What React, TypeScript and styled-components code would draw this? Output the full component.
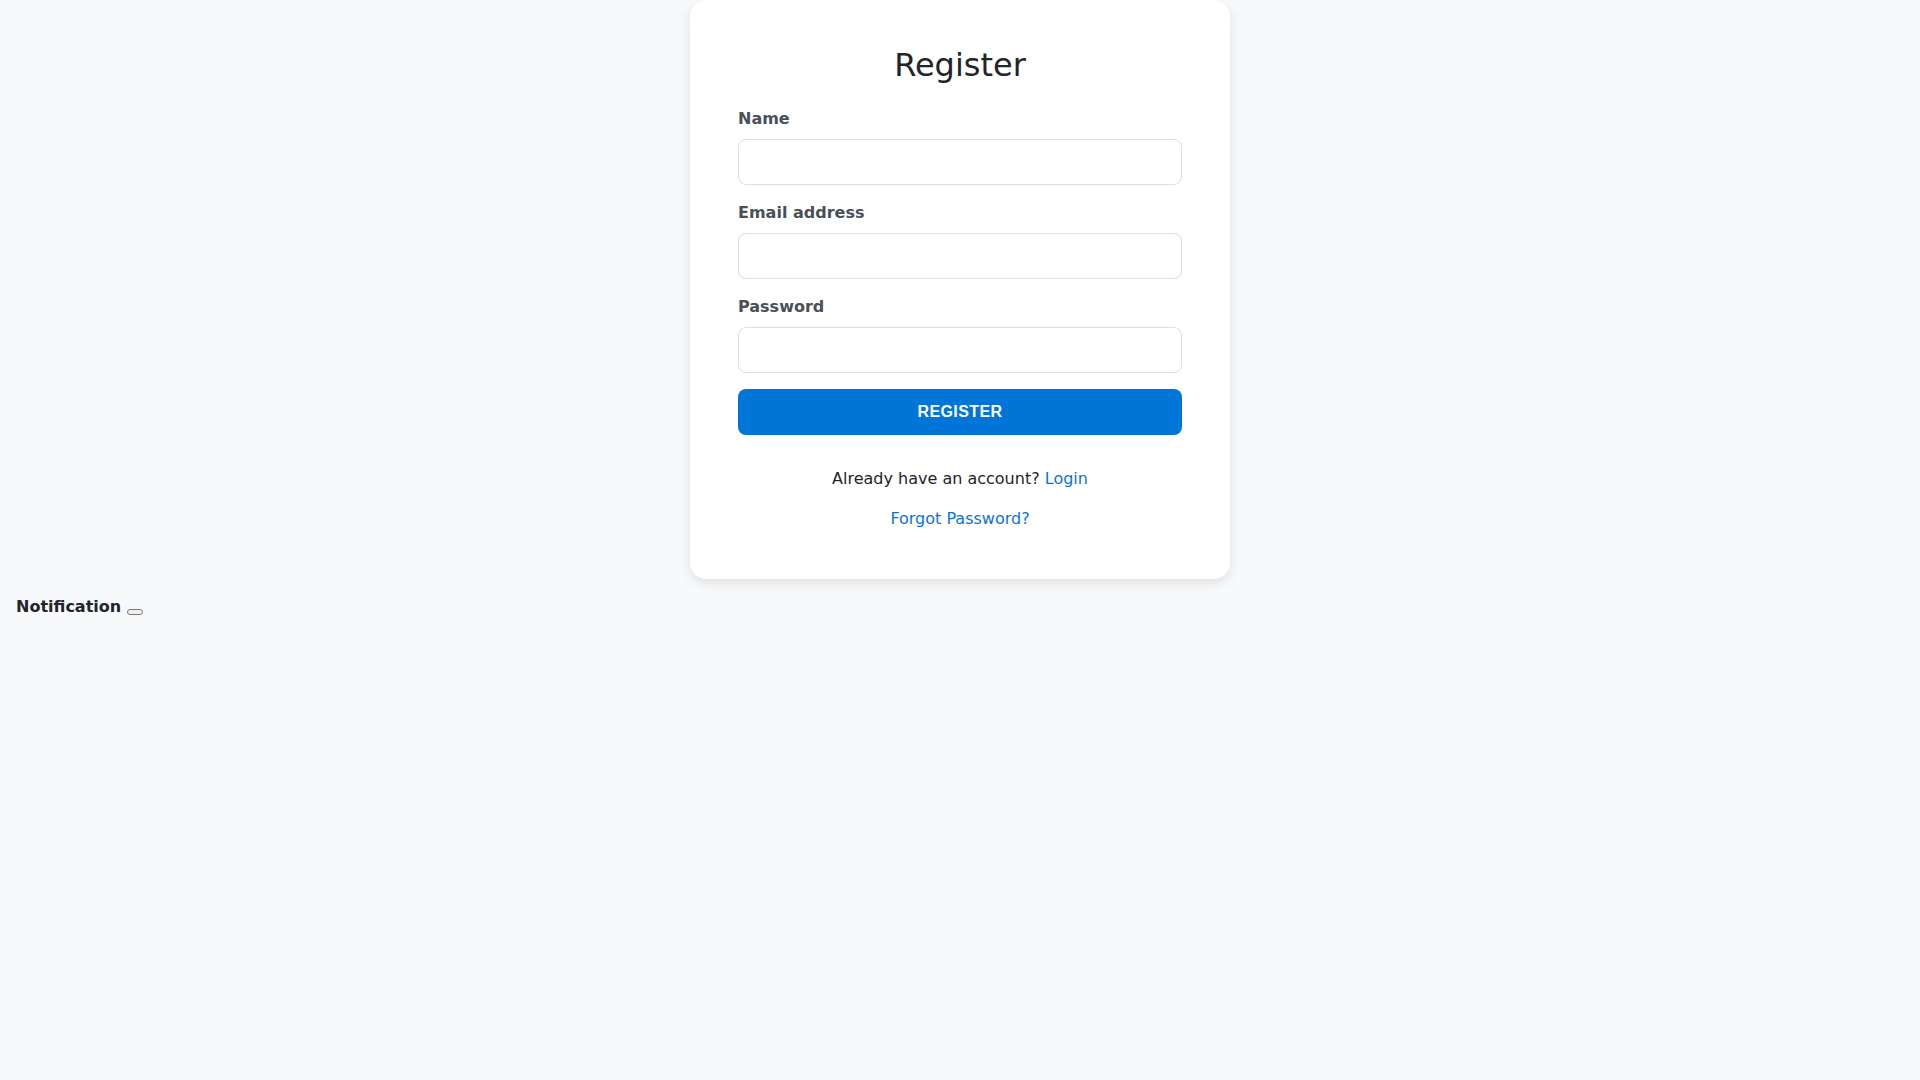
import React from "react";
import styled, { createGlobalStyle } from "styled-components";

const GlobalStyle = createGlobalStyle`
  html, body {
    margin: 0;
    padding: 0;
    background: #f8f9fa;
    font-family: "DejaVu Sans", sans-serif;
    font-size: 16px;
    line-height: 1.5;
    color: #212529;
  }
  * {
    box-sizing: border-box;
  }
`;

const Page = styled.div`
  min-height: 100vh;
  display: flex;
  flex-direction: column;
`;

const Card = styled.div`
  width: 540px;
  margin: 0 auto;
  padding: 46px 48px 48px;
  background: #fff;
  border-radius: 16px;
  box-shadow: 0 4px 12px rgba(0, 0, 0, 0.1);
`;

const Title = styled.h1`
  margin: 0 0 23px;
  font-size: 32px;
  font-weight: 400;
  line-height: 1.2;
  text-align: center;
  color: #212529;
`;

const Field = styled.div`
  display: flex;
  flex-direction: column;
  gap: 8px;
  margin-bottom: 16px;
`;

const Label = styled.label`
  font-weight: 700;
  color: #495057;
  line-height: 24px;
`;

const Input = styled.input`
  width: 100%;
  height: 46px;
  padding: 10px 12px;
  border: 1px solid #dcdee2;
  border-radius: 8px;
  background: #fff;
  font-family: "DejaVu Sans", sans-serif;
  font-size: 16px;
  outline: none;
`;

const SubmitButton = styled.button`
  display: block;
  width: 100%;
  height: 46px;
  margin-top: 2px;
  border: none;
  border-radius: 8px;
  background: #0075d8;
  color: #fff;
  font-family: "Liberation Sans", Arial, sans-serif;
  font-size: 16px;
  font-weight: 600;
  letter-spacing: 0.4px;
  cursor: pointer;
`;

const Footnote = styled.p<{ $first?: boolean }>`
  margin: ${(p) => (p.$first ? "32px" : "16px")} 0 0;
  text-align: center;
  line-height: 24px;
`;

const Link = styled.a`
  color: #0a74d6;
  text-decoration: none;
`;

const Notice = styled.div`
  padding: 16px;
  line-height: 24px;
  font-weight: 700;
  color: #212529;
`;

const CloseButton = styled.button`
  width: 16px;
  height: 6px;
  padding: 0;
  margin: 0;
  vertical-align: -2px;
  background: #efefef;
  border: 1px solid #7a7a7a;
  border-radius: 3px;
`;

const fields = [
  { id: "name", label: "Name", type: "text" },
  { id: "email", label: "Email address", type: "email" },
  { id: "password", label: "Password", type: "password" },
];

export default function App() {
  return (
    <Page>
      <GlobalStyle />
      <Card>
        <Title>Register</Title>
        <form onSubmit={(e) => e.preventDefault()}>
          {fields.map((f) => (
            <Field key={f.id}>
              <Label htmlFor={f.id}>{f.label}</Label>
              <Input id={f.id} type={f.type} />
            </Field>
          ))}
          <SubmitButton type="submit">REGISTER</SubmitButton>
        </form>
        <Footnote $first>
          Already have an account? <Link href="#">Login</Link>
        </Footnote>
        <Footnote>
          <Link href="#">Forgot Password?</Link>
        </Footnote>
      </Card>
      <Notice>
        Notification <CloseButton aria-label="close" />
      </Notice>
    </Page>
  );
}
